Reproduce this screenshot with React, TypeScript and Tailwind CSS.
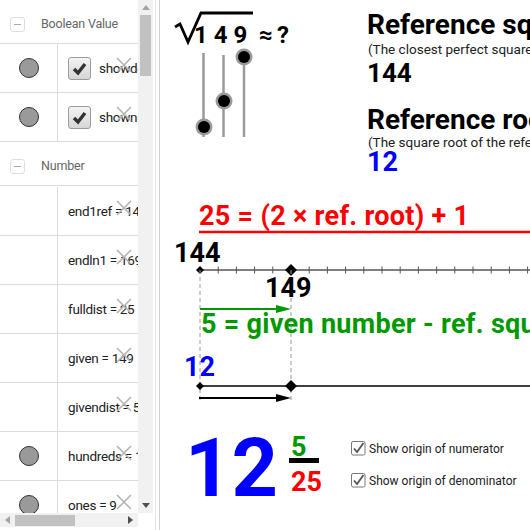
import React from 'react'

// Algebra view row: marble column + definition text, with the faint delete cross on top
function AlgebraRow({
  marble,
  checkbox,
  text,
}: {
  marble?: boolean
  checkbox?: boolean
  text: string
}) {
  return (
    <div className="relative flex h-[49px] shrink-0 border-b border-[#dcdcdc]">
      <div className="flex w-[58px] shrink-0 items-center justify-center border-r border-[#dcdcdc]">
        {marble && (
          <span className="block h-[20px] w-[20px] rounded-full border border-[#333] bg-[#9a9a9a]" />
        )}
      </div>
      <div className="flex min-w-0 flex-1 items-center gap-[8px] overflow-hidden whitespace-nowrap pl-[10px] text-[13.5px] tracking-[-0.3px] text-[#222]">
        {checkbox && <BoolBox />}
        <span>{text}</span>
      </div>
      <svg className="absolute left-[116px] top-[13px]" width="16" height="16" viewBox="0 0 16 16">
        <path d="M1 1L15 15M15 1L1 15" stroke="#b4b4b4" strokeWidth="1.6" fill="none" />
      </svg>
    </div>
  )
}

function BoolBox() {
  return (
    <span className="flex h-[23px] w-[23px] shrink-0 items-center justify-center rounded-[3px] border border-[#9c9c9c] bg-gradient-to-b from-[#f4f4f4] to-[#d6d6d6]">
      <svg width="17" height="17" viewBox="0 0 17 17">
        <path d="M3 9L7 13L14 4" stroke="#333" strokeWidth="3.4" fill="none" />
      </svg>
    </span>
  )
}

function GroupHeader({ label }: { label: string }) {
  return (
    <div className="flex h-[44px] shrink-0 items-center gap-[16px] border-b border-[#dcdcdc] pl-[10px] pt-[6px]">
      <span className="flex h-[15px] w-[15px] items-center justify-center rounded-[3px] border border-[#dedede]">
        <span className="block h-px w-[7px] bg-[#aaa]" />
      </span>
      <span className="text-[12.5px] tracking-[-0.2px] text-[#666]">{label}</span>
    </div>
  )
}

function ShowBox() {
  return (
    <svg width="15" height="15" viewBox="0 0 15 15">
      <rect x="0.5" y="0.5" width="13.5" height="13.5" rx="1.5" fill="#fff" stroke="#777" />
      <path d="M3 7.5L6 11L12.5 2" stroke="#555" strokeWidth="1.8" fill="none" />
    </svg>
  )
}

export default function App() {
  const ticks = Array.from({ length: 18 }, (_, i) => 40 + 18.2 * (i + 1)).filter((x) => x < 370)

  return (
    <div className="flex h-[530px] w-[530px] overflow-hidden bg-white">
      {/* Algebra view */}
      <div className="flex w-[153px] shrink-0 flex-col font-[Roboto,sans-serif]">
        <div className="flex h-[513px]">
          <div className="flex w-[138px] flex-col overflow-hidden">
            <GroupHeader label="Boolean Value" />
            <AlgebraRow marble checkbox text="showdenominator" />
            <AlgebraRow marble checkbox text="shownumerator" />
            <div className="h-[45px] shrink-0">
              <GroupHeader label="Number" />
            </div>
            <AlgebraRow text="end1ref = 144" />
            <AlgebraRow text="endln1 = 169" />
            <AlgebraRow text="fulldist = 25" />
            <AlgebraRow text="given = 149" />
            <AlgebraRow text="givendist = 5" />
            <AlgebraRow marble text="hundreds = 1" />
            <AlgebraRow marble text="ones = 9" />
          </div>
          <div className="flex w-[15px] flex-col items-center bg-[#f1f1f1]">
            <div className="flex h-[15px] items-center justify-center">
              <svg width="8" height="5" viewBox="0 0 8 5">
                <path d="M0 5L4 0L8 5Z" fill="#a3a3a3" />
              </svg>
            </div>
            <div className="h-[61px] w-[11px] bg-[#c1c1c1]" />
            <div className="flex-1" />
            <div className="flex h-[15px] items-center justify-center">
              <svg width="8" height="5" viewBox="0 0 8 5">
                <path d="M0 0L4 5L8 0Z" fill="#505050" />
              </svg>
            </div>
          </div>
        </div>
        <div className="flex h-[14px]">
          <div className="flex w-[138px] items-center bg-[#f1f1f1]">
            <div className="flex w-[15px] justify-center">
              <svg width="5" height="8" viewBox="0 0 5 8">
                <path d="M5 0L0 4L5 8Z" fill="#a3a3a3" />
              </svg>
            </div>
            <div className="h-[11px] w-[60px] bg-[#c1c1c1]" />
            <div className="flex-1" />
            <div className="flex w-[15px] justify-center">
              <svg width="5" height="8" viewBox="0 0 5 8">
                <path d="M0 0L5 4L0 8Z" fill="#505050" />
              </svg>
            </div>
          </div>
          <div className="w-[15px]" />
        </div>
      </div>

      {/* splitter */}
      <div className="flex w-[7px] shrink-0">
        <div className="ml-[2px] w-[5px] border-l border-r border-l-[#e6e6e6] border-r-[#d2d2d2] bg-white" />
      </div>

      {/* Graphics view: free canvas */}
      <div className="relative h-[530px] flex-1 overflow-hidden bg-white font-[Roboto,sans-serif] leading-none">
        <svg className="absolute left-0 top-0" width="370" height="530" viewBox="0 0 370 530">
          {/* radical */}
          <path d="M15 27L20 24L28 42L41 13L93 13" stroke="#000" strokeWidth="2.8" fill="none" strokeLinejoin="miter" />
          {/* sliders */}
          <line x1="43.5" y1="53" x2="43.5" y2="137" stroke="#9a9a9a" strokeWidth="2.5" />
          <line x1="63.5" y1="55" x2="63.5" y2="137" stroke="#9a9a9a" strokeWidth="2.5" />
          <line x1="84" y1="57" x2="84" y2="137" stroke="#9a9a9a" strokeWidth="2.5" />
          {[
            [44, 127],
            [64, 101],
            [84, 57],
          ].map(([x, y]) => (
            <g key={x}>
              <circle cx={x} cy={y} r="8.5" fill="#999" />
              <circle cx={x} cy={y} r="6" fill="#000" />
            </g>
          ))}

          {/* red underline */}
          <line x1="39" y1="232" x2="370" y2="232" stroke="#ff0000" strokeWidth="2.5" />

          {/* number line */}
          <line x1="40" y1="270" x2="370" y2="270" stroke="#555" strokeWidth="1.6" />
          {ticks.map((x) => (
            <line key={x} x1={x} y1="266.5" x2={x} y2="273.5" stroke="#555" strokeWidth="1" />
          ))}
          <polygon points="40,266 44,270 40,274 36,270" fill="#000" />
          <polygon points="131,264 137,270 131,276 125,270" fill="#000" />

          {/* dashed guides */}
          <line x1="40" y1="270" x2="40" y2="400" stroke="#9a9a9a" strokeWidth="1" strokeDasharray="4 3" />
          <line x1="131" y1="270" x2="131" y2="400" stroke="#9a9a9a" strokeWidth="1" strokeDasharray="4 3" />

          {/* green arrow */}
          <line x1="40" y1="309" x2="118" y2="309" stroke="#009900" strokeWidth="2" />
          <polygon points="131,309 116,305 116,313" fill="#009900" />

          {/* root line */}
          <line x1="40" y1="386" x2="370" y2="386" stroke="#000" strokeWidth="1.4" />
          <polygon points="40,382 44,386 40,390 36,386" fill="#000" />
          <polygon points="131,380 137,386 131,392 125,386" fill="#000" />

          {/* black arrow */}
          <line x1="39" y1="398" x2="118" y2="398" stroke="#000" strokeWidth="2" />
          <polygon points="131,398 116,394 116,402" fill="#000" />

          {/* fraction bar */}
          <rect x="129" y="458" width="30" height="5" fill="#000" />
        </svg>

        <span className="absolute left-[34px] top-[23px] text-[24px] font-bold tracking-[6px] text-black">149</span>
        <span className="absolute left-[99px] top-[23px] text-[24px] font-bold text-black">≈</span>
        <span className="absolute left-[117px] top-[23px] text-[24px] font-bold text-black">?</span>

        <span className="absolute left-[207px] top-[11px] whitespace-nowrap text-[28px] font-bold text-black">
          Reference square
        </span>
        <span className="absolute left-[208px] top-[43px] whitespace-nowrap text-[13.5px] text-[#222]">
          (The closest perfect square &lt; given number)
        </span>
        <span className="absolute left-[207px] top-[60px] text-[26px] font-bold text-black">144</span>

        <span className="absolute left-[207px] top-[106px] whitespace-nowrap text-[28px] font-bold text-black">
          Reference root
        </span>
        <span className="absolute left-[208px] top-[136px] whitespace-nowrap text-[13.5px] text-[#222]">
          (The square root of the reference square)
        </span>
        <span className="absolute left-[207px] top-[149px] text-[27px] font-bold text-[#0000ff]">12</span>

        <span className="absolute left-[39px] top-[203px] whitespace-nowrap text-[27px] font-bold tracking-[0.3px] text-[#ff0000]">
          25 = (2 × ref. root) + 1
        </span>
        <span className="absolute left-[14px] top-[240px] text-[27px] font-bold text-black">144</span>
        <span className="absolute left-[105px] top-[275px] text-[27px] font-bold text-black">149</span>
        <span className="absolute left-[41px] top-[311px] whitespace-nowrap text-[27px] font-bold tracking-[0.3px] text-[#009900]">
          5 = given number - ref. square
        </span>
        <span className="absolute left-[24px] top-[354px] text-[27px] font-bold text-[#0000ff]">12</span>

        <span className="absolute left-[25px] top-[428px] text-[81px] font-bold text-[#0000ff]">12</span>
        <span className="absolute left-[131px] top-[434px] text-[27px] font-bold text-[#009900]">5</span>
        <span className="absolute left-[131px] top-[469px] text-[27px] font-bold text-[#ff0000]">25</span>

        <div className="absolute left-[191px] top-[441px] flex items-center gap-[3px]">
          <ShowBox />
          <span className="whitespace-nowrap text-[12px] text-[#222]">Show origin of numerator</span>
        </div>
        <div className="absolute left-[191px] top-[473px] flex items-center gap-[3px]">
          <ShowBox />
          <span className="whitespace-nowrap text-[12px] text-[#222]">Show origin of denominator</span>
        </div>
      </div>
    </div>
  )
}
